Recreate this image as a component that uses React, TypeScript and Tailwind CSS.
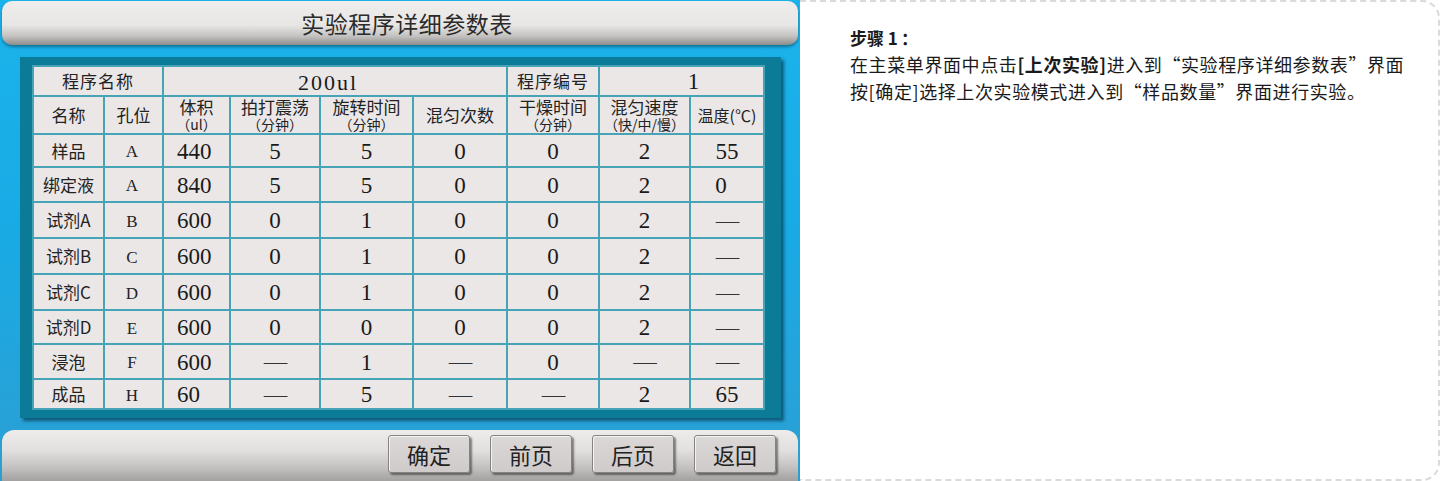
import React from "react";

const CJK = "font-['Noto_Sans_CJK_SC',sans-serif]";
const NUM = "font-['Liberation_Serif','Noto_Sans_CJK_SC',serif]";

const rows: string[][] = [
  ["样品", "A", "440", "5", "5", "0", "0", "2", "55"],
  ["绑定液", "A", "840", "5", "5", "0", "0", "2", "0"],
  ["试剂A", "B", "600", "0", "1", "0", "0", "2", "-"],
  ["试剂B", "C", "600", "0", "1", "0", "0", "2", "-"],
  ["试剂C", "D", "600", "0", "1", "0", "0", "2", "-"],
  ["试剂D", "E", "600", "0", "0", "0", "0", "2", "-"],
  ["浸泡", "F", "600", "-", "1", "-", "0", "-", "-"],
  ["成品", "H", "60", "-", "5", "-", "-", "2", "65"],
];

function Dash() {
  return (
    <span className={`${CJK} text-[15px] leading-none text-[#333] tracking-[-1px]`}>——</span>
  );
}

function DataCell({ v, col }: { v: string; col: number }) {
  const base = "bg-[#ebe7e7] flex items-center";
  if (col === 0) {
    return (
      <div className={`${base} justify-center ${CJK} text-[17px] text-[#222]`}>{v}</div>
    );
  }
  if (col === 1) {
    return (
      <div className={`${base} justify-center ${NUM} text-[17px] text-[#222] pt-[3px] pr-[3px]`}>{v}</div>
    );
  }
  if (v === "-") {
    return (
      <div className={`${base} justify-center`}>
        <Dash />
      </div>
    );
  }
  if (col === 2) {
    return (
      <div className={`${base} justify-start pl-[13px] ${NUM} text-[23px] text-[#1a1a1a] pt-[3px]`}>{v}</div>
    );
  }
  const extra = col === 8 && v === "0" ? "pr-[12px]" : "";
  return (
    <div className={`${base} justify-center ${NUM} text-[23px] text-[#1a1a1a] pt-[3px] ${extra}`}>{v}</div>
  );
}

function Head2({ a, b }: { a: string; b?: string }) {
  return (
    <div className={`bg-[#ebe7e7] flex flex-col items-center justify-center ${CJK} text-[#222] whitespace-nowrap`}>
      <span className="text-[17px] leading-[18px]">{a}</span>
      {b && <span className="text-[14px] leading-[16px]">{b}</span>}
    </div>
  );
}

function Btn({ t }: { t: string }) {
  return (
    <div
      className={`w-[82px] h-[38px] flex items-center justify-center rounded-[3px] border border-[#858282] bg-gradient-to-b from-[#dcd8d8] to-[#cfcbcb] shadow-[2px_2px_2px_rgba(0,0,0,0.45),inset_1px_1px_0_#f4f2f2] ${CJK} text-[22px] text-[#222]`}
    >
      {t}
    </div>
  );
}

export default function App() {
  return (
    <div className="flex w-[1440px] h-[481px] bg-white overflow-hidden">
      {/* HMI screen */}
      <div className="w-[800px] h-[481px] shrink-0 flex flex-col bg-gradient-to-b from-[#1bb3eb] via-[#19aae4] to-[#2a9fd3] overflow-hidden">
        <div className="shrink-0 mx-[2px] mt-[1px] h-[44px] rounded-[10px] bg-[linear-gradient(to_bottom,#f0eded_0%,#e8e5e5_55%,#c4c1c1_80%,#8f8c8c_100%)] shadow-[0_2px_3px_rgba(0,0,0,0.35)] flex items-center justify-center pl-[14px]">
          <span className={`${CJK} text-[23px] text-[#2a2a2a] tracking-[0.5px]`}>实验程序详细参数表</span>
        </div>

        <div className="shrink-0 ml-[20px] mt-[12px] w-[761px] h-[361px] bg-[#0c7b97] shadow-[3px_3px_3px_rgba(0,40,60,0.6)] pl-[12px] pt-[8px]">
          <div className="grid grid-cols-[69px_57px_65px_88px_91px_92px_90px_89px_72px] grid-rows-[28px_36px_31px_33px_34px_34px_34px_32px_33px_28px] gap-[2px] p-[2px] bg-[#47a3b6] w-[733px] h-[345px]">
            {/* row 1 */}
            <div className={`col-span-2 bg-[#ebe7e7] flex items-center justify-center ${CJK} text-[17px] text-[#222] tracking-[1px]`}>程序名称</div>
            <div className={`col-span-4 bg-[#ebe7e7] flex items-center justify-center pr-[14px] pt-[2px] ${NUM} text-[22px] tracking-[2px] text-[#1a1a1a]`}>200ul</div>
            <div className={`bg-[#ebe7e7] flex items-center justify-center ${CJK} text-[17px] text-[#222] tracking-[1px]`}>程序编号</div>
            <div className={`col-span-2 bg-[#ebe7e7] flex items-center justify-center pl-[24px] ${NUM} text-[23px] text-[#1a1a1a] pt-[2px]`}>1</div>
            {/* row 2 */}
            <Head2 a="名称" />
            <Head2 a="孔位" />
            <Head2 a="体积" b="（ul）" />
            <Head2 a="拍打震荡" b="（分钟）" />
            <Head2 a="旋转时间" b="（分钟）" />
            <Head2 a="混匀次数" />
            <Head2 a="干燥时间" b="（分钟）" />
            <Head2 a="混匀速度" b="（快/中/慢）" />
            <div className={`bg-[#ebe7e7] flex items-center justify-center ${CJK} text-[16px] text-[#222] whitespace-nowrap`}>温度(℃)</div>
            {rows.map((r, ri) =>
              r.map((v, ci) => <DataCell key={`${ri}-${ci}`} v={v} col={ci} />)
            )}
          </div>
        </div>

        <div className="shrink-0 mx-[2px] mt-[12px] h-[51px] rounded-t-[12px] bg-[linear-gradient(to_bottom,#eeebeb_0%,#e2dfdf_40%,#c2bfbf_75%,#a3a0a0_100%)] flex justify-end items-start gap-[20px] pr-[22px] pt-[5px]">
          <Btn t="确定" />
          <Btn t="前页" />
          <Btn t="后页" />
          <Btn t="返回" />
        </div>
      </div>

      {/* Description */}
      <div className={`flex-1 h-[481px] border-t-2 border-r-2 border-b-2 border-dashed border-[#dadada] rounded-r-[18px] pl-[50px] pt-[23px] ${CJK} text-[#1a1a1a]`}>
        <div className="text-[17px] font-bold leading-[26px]">
          步骤 1<span className="ml-[3px]">：</span>
        </div>
        <div className="text-[18px] leading-[27px] tracking-[0.6px]">
          在主菜单界面中点击<span className="font-bold">[上次实验]</span>进入到“实验程序详细参数表”界面
          <br />
          按[确定]选择上次实验模式进入到“样品数量”界面进行实验。
        </div>
      </div>
    </div>
  );
}
